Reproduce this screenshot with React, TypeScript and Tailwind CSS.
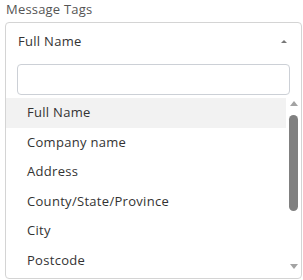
const items = [
  "Full Name",
  "Company name",
  "Address",
  "County/State/Province",
  "City",
  "Postcode",
];

export default function App() {
  return (
    <div className="h-[280px] w-[303px] overflow-hidden bg-white font-['Open_Sans',sans-serif] text-[#333]">
      <div className="pl-[6px] pt-[1px] text-[13px] leading-[17px] tracking-[0.2px] text-[#555]">Message Tags</div>
      <div className="ml-[5px] mt-[4px] h-[257px] w-[297px] overflow-hidden rounded-[4px] border border-[#d4d4d4]">
        <div className="flex h-[36px] items-center justify-between pl-[12px] pr-[14px] pt-[2px] text-[13px] tracking-[0.3px]">
          <span>Full Name</span>
          <span className="mb-[2px] h-0 w-0 border-x-[3px] border-b-[3px] border-x-transparent border-b-[#777]" />
        </div>
        <div className="px-[11px] pt-[5px]">
          <div className="h-[31px] rounded-[4px] border border-[#ccd0d6]" />
        </div>
        <div className="mt-[3px] flex">
          <ul className="w-[280px]">
            {items.map((item, i) => (
              <li
                key={item}
                className={`flex h-[29.5px] items-center pl-[21px] text-[13px] tracking-[0.3px] ${i === 0 ? "bg-[#f2f2f2]" : ""}`}
              >
                {item}
              </li>
            ))}
          </ul>
          <div className="flex w-[15px] flex-col items-center pt-[3px]">
            <span className="h-0 w-0 border-x-[4px] border-b-[5px] border-x-transparent border-b-[#a3a3a3]" />
            <span className="mt-[9px] h-[96px] w-[9px] rounded-[5px] bg-[#808080]" />
            <span className="mt-[53px] h-0 w-0 border-x-[4px] border-t-[5px] border-x-transparent border-t-[#a3a3a3]" />
          </div>
        </div>
      </div>
    </div>
  );
}
